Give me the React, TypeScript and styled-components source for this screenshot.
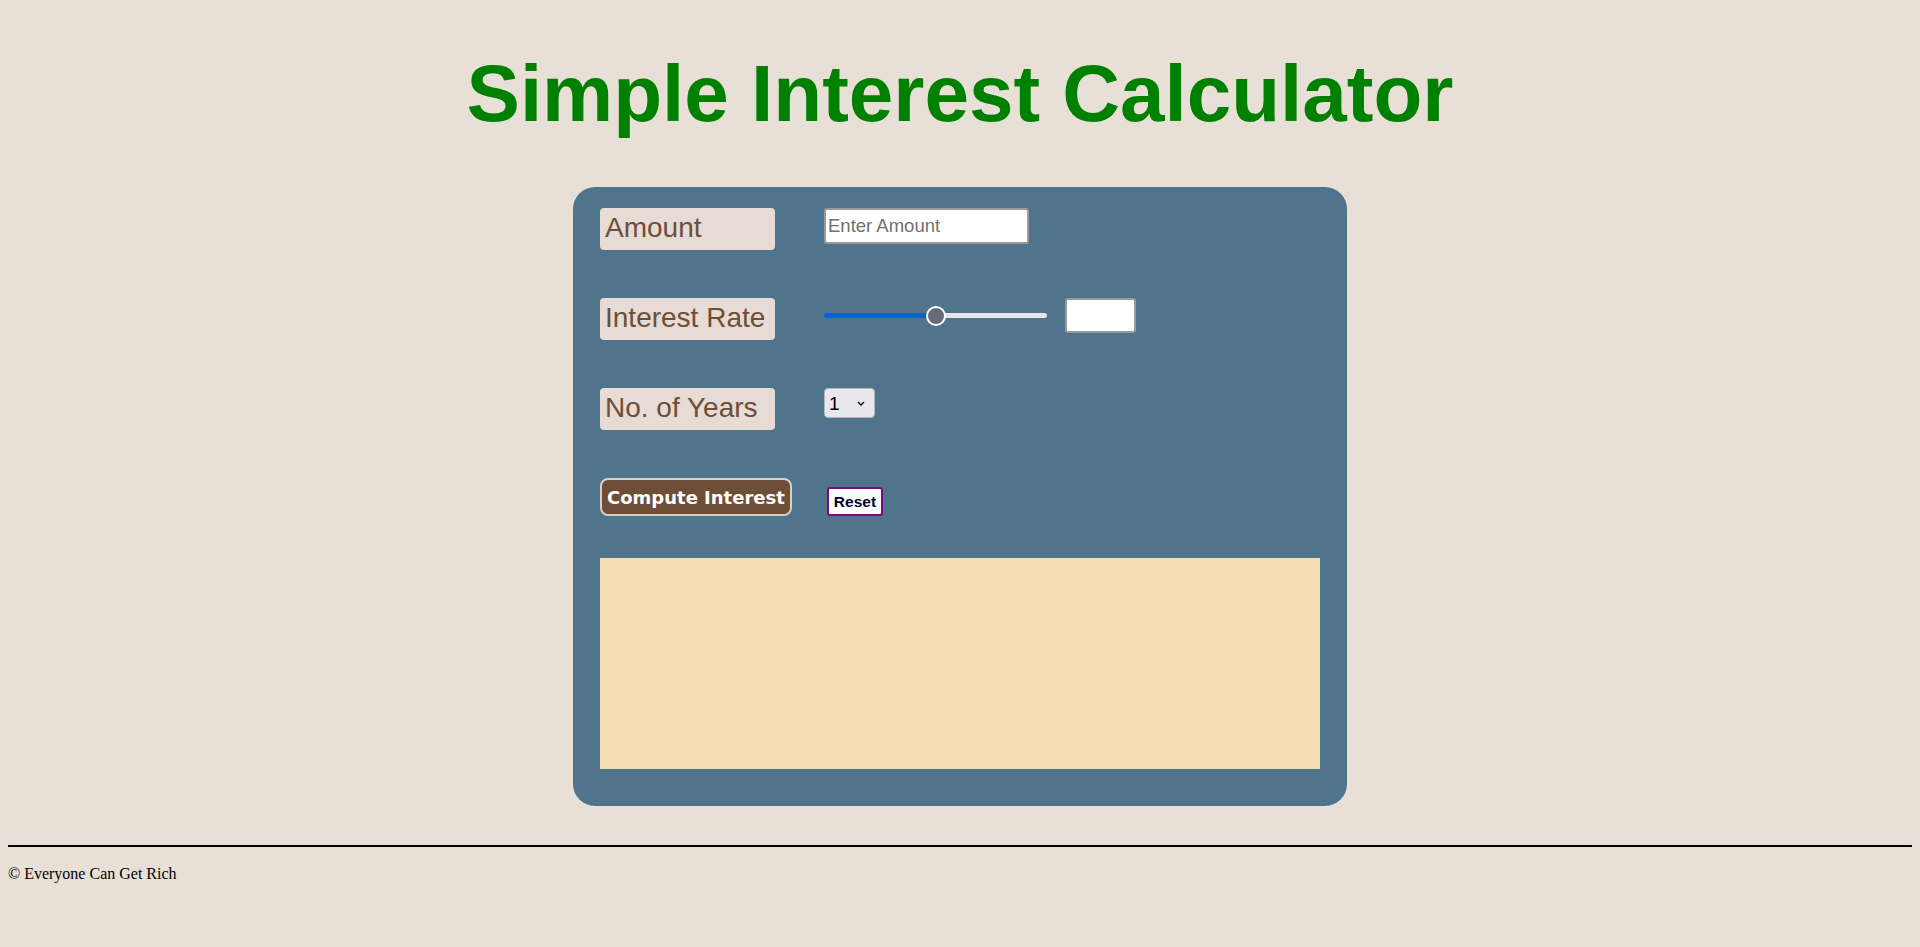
import React, { useState } from "react";
import styled, { createGlobalStyle } from "styled-components";

const GlobalStyle = createGlobalStyle`
  html, body {
    margin: 0;
    padding: 0;
  }
  body {
    margin: 8px;
    background: #e8e0d7;
    font-family: "Liberation Serif", "Times New Roman", serif;
    color: #000;
  }
`;

const Page = styled.div`
  display: flex;
  flex-direction: column;
`;

const Title = styled.h1`
  margin: 40px 0 0;
  text-align: center;
  font-family: "Liberation Sans", Arial, sans-serif;
  font-weight: 700;
  font-size: 80px;
  line-height: 92px;
  color: #008000;
`;

const Card = styled.div`
  align-self: center;
  box-sizing: border-box;
  width: 774px;
  margin-top: 47px;
  padding: 21px 27px 37px;
  background: #50748c;
  border-radius: 22px;
  display: flex;
  flex-direction: column;
`;

const Row = styled.div<{ $last?: boolean }>`
  display: flex;
  align-items: ${(p) => (p.$last ? "flex-end" : "flex-start")};
  gap: ${(p) => (p.$last ? "35px" : "49px")};
  margin-bottom: ${(p) => (p.$last ? "42px" : "48px")};
`;

const Label = styled.label`
  box-sizing: border-box;
  width: 175px;
  height: 42px;
  padding: 0 0 3px 5px;
  display: flex;
  align-items: center;
  background: #e6dbd5;
  border-radius: 4px;
  font-family: "Liberation Sans", Arial, sans-serif;
  font-size: 28px;
  color: #6f4e37;
`;

const Controls = styled.div`
  display: flex;
  align-items: center;
  gap: 18px;
  min-height: 35px;
`;

const AmountInput = styled.input`
  box-sizing: border-box;
  width: 205px;
  height: 36px;
  padding: 0 2px;
  border: 2px solid #9a9a9a;
  border-radius: 3px;
  background: #fff;
  font-family: "Liberation Sans", Arial, sans-serif;
  font-size: 18.5px;
  color: #222;
  outline: none;
  &::placeholder {
    color: #707070;
  }
`;

const Slider = styled.input`
  -webkit-appearance: none;
  appearance: none;
  width: 223px;
  height: 20px;
  margin: 0;
  background: transparent;
  outline: none;
  &::-webkit-slider-runnable-track {
    height: 5px;
    border-radius: 3px;
    background: var(--track);
  }
  &::-webkit-slider-thumb {
    -webkit-appearance: none;
    appearance: none;
    box-sizing: border-box;
    width: 20px;
    height: 20px;
    margin-top: -7.5px;
    border-radius: 50%;
    background: #696978;
    border: 2px solid #fff;
  }
`;

const RateBox = styled.input`
  box-sizing: border-box;
  width: 71px;
  height: 35px;
  border: 2px solid #9a9a9a;
  border-radius: 3px;
  background: #fff;
  font-family: "Liberation Sans", Arial, sans-serif;
  font-size: 18px;
  outline: none;
`;

const SelectWrap = styled.div`
  position: relative;
  align-self: flex-start;
  width: 51px;
  height: 30px;
`;

const YearSelect = styled.select`
  -webkit-appearance: none;
  appearance: none;
  box-sizing: border-box;
  width: 51px;
  height: 30px;
  padding: 0 0 0 4px;
  border: 1px solid #b4b4bc;
  border-radius: 4px;
  background: #e9e9ed;
  font-family: "Liberation Sans", Arial, sans-serif;
  font-size: 19px;
  color: #000;
  outline: none;
`;

const Chevron = styled.svg`
  position: absolute;
  right: 10px;
  top: 13px;
  pointer-events: none;
`;

const ComputeButton = styled.button`
  box-sizing: border-box;
  height: 38px;
  padding: 0 5px;
  border: 2px solid #d4d0cc;
  border-radius: 8px;
  background: #6f4e37;
  color: #fff;
  font-family: "DejaVu Sans", Verdana, sans-serif;
  font-weight: 700;
  font-size: 18px;
  cursor: pointer;
`;

const ResetButton = styled.button`
  box-sizing: border-box;
  height: 29px;
  padding: 0 5px;
  border: 2px solid #7a0a7a;
  border-radius: 3px;
  background: #fff;
  color: #000033;
  font-family: "Liberation Sans", Arial, sans-serif;
  font-weight: 700;
  font-size: 15.5px;
  cursor: pointer;
`;

const Result = styled.div`
  height: 211px;
  background: #f5deb3;
`;

const Footer = styled.footer`
  display: flex;
  flex-direction: column;
  margin-top: 39px;
`;

const Rule = styled.div`
  height: 2px;
  background: #000;
`;

const Copy = styled.p`
  margin: 18px 0 0;
  font-family: "Liberation Serif", "Times New Roman", serif;
  font-size: 16px;
`;

export default function App() {
  const [rate, setRate] = useState(50);
  const pct = rate;
  return (
    <>
      <GlobalStyle />
      <Page>
        <Title>Simple Interest Calculator</Title>
        <Card>
          <Row>
            <Label>Amount</Label>
            <Controls>
              <AmountInput type="number" placeholder="Enter Amount" />
            </Controls>
          </Row>
          <Row>
            <Label>Interest Rate</Label>
            <Controls>
              <Slider
                type="range"
                min={0}
                max={100}
                value={rate}
                onChange={(e) => setRate(Number(e.target.value))}
                style={
                  {
                    "--track": `linear-gradient(to right, #0060df 0%, #0060df ${pct}%, #e6e6eb ${pct}%, #e6e6eb 100%)`,
                  } as React.CSSProperties
                }
              />
              <RateBox type="text" readOnly value="" />
            </Controls>
          </Row>
          <Row>
            <Label>No. of Years</Label>
            <Controls>
              <SelectWrap>
                <YearSelect defaultValue="1">
                  {Array.from({ length: 10 }, (_, i) => (
                    <option key={i + 1} value={String(i + 1)}>
                      {i + 1}
                    </option>
                  ))}
                </YearSelect>
                <Chevron width="8" height="5" viewBox="0 0 8 5">
                  <path d="M1 1 L4 4 L7 1" fill="none" stroke="#000" strokeWidth="1.3" />
                </Chevron>
              </SelectWrap>
            </Controls>
          </Row>
          <Row $last>
            <ComputeButton type="button">Compute Interest</ComputeButton>
            <ResetButton type="button">Reset</ResetButton>
          </Row>
          <Result />
        </Card>
        <Footer>
          <Rule />
          <Copy>© Everyone Can Get Rich</Copy>
        </Footer>
      </Page>
    </>
  );
}
